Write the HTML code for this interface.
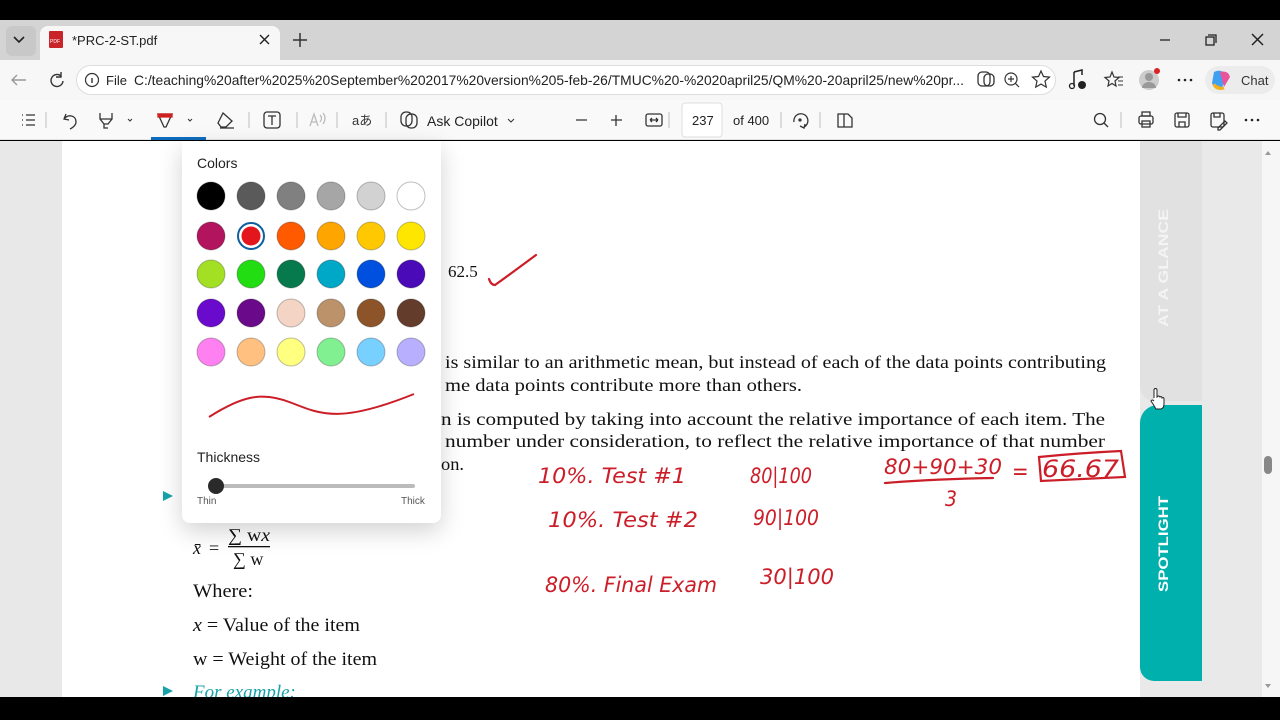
<!DOCTYPE html>
<html><head><meta charset="utf-8"><style>
*{margin:0;padding:0;box-sizing:border-box}
body{width:1280px;height:720px;overflow:hidden;background:#000;font-family:"Liberation Sans",sans-serif;position:relative}
.a{position:absolute}
</style></head><body>
<div class="a" style="left:0;top:20px;width:1280px;height:40px;background:#d4d4d4"></div>
<div class="a" style="left:6px;top:26px;width:30px;height:30px;background:#c8c8c8;border-radius:6px"></div>
<div class="a" style="left:40px;top:26px;width:240px;height:36px;background:#f7f7f7;border-radius:8px 8px 0 0"></div>
<svg class="a" style="left:0;top:20px" width="1280" height="40">
<path d="M14 17l5 5 5-5" stroke="#222" stroke-width="1.6" fill="none"/>
<rect x="49" y="11" width="14" height="17" rx="1" fill="#c8242a"/><text x="50" y="23" font-size="5" fill="#fff" font-family="Liberation Sans">PDF</text>
<text x="72" y="25" font-size="13" fill="#222" font-family="Liberation Sans">*PRC-2-ST.pdf</text>
<path d="M260 15l9 9M269 15l-9 9" stroke="#222" stroke-width="1.4"/>
<path d="M300 13v14M293 20h14" stroke="#333" stroke-width="1.5"/>
<path d="M1160 20h10" stroke="#222" stroke-width="1.3"/>
<rect x="1206" y="17" width="8" height="8" fill="none" stroke="#222" stroke-width="1.3"/><path d="M1208 15h8v8" stroke="#222" fill="none" stroke-width="1.3"/>
<path d="M1252 14l11 11M1263 14l-11 11" stroke="#222" stroke-width="1.5"/>
</svg>
<div class="a" style="left:0;top:60px;width:1280px;height:40px;background:#f7f7f7"></div>
<div class="a" style="left:76px;top:65px;width:980px;height:30px;background:#fff;border:1px solid #ddd;border-radius:16px"></div>
<svg class="a" style="left:0;top:60px" width="1280" height="40">
<path d="M26 20h-14M17 15l-5 5 5 5" stroke="#999" stroke-width="1.4" fill="none"/>
<path d="M61 16a6 6 0 1 0 2 5M61 12v5h-5" stroke="#333" stroke-width="1.4" fill="none"/>
<circle cx="92" cy="20" r="6.5" fill="none" stroke="#333" stroke-width="1.2"/><path d="M92 18v5" stroke="#333" stroke-width="1.4"/>
<text x="106" y="25" font-size="13" fill="#222">File</text>
<text x="134" y="25" font-size="14" fill="#222" textLength="830" lengthAdjust="spacingAndGlyphs">C:/teaching%20after%2025%20September%202017%20version%205-feb-26/TMUC%20-%2020april25/QM%20-20april25/new%20pr...</text>
<rect x="978" y="12" width="12" height="14" rx="4" fill="none" stroke="#333" stroke-width="1.3"/><rect x="984" y="14" width="10" height="12" rx="4" fill="none" stroke="#333" stroke-width="1.3"/>
<circle cx="1011" cy="19" r="6" fill="none" stroke="#333" stroke-width="1.2"/><path d="M1015 23l4 4M1008 19h6M1011 16v6" stroke="#333" stroke-width="1.2"/>
<path d="M1041 11l2.5 5.5 6 .6-4.5 4 1.3 6-5.3-3-5.3 3 1.3-6-4.5-4 6-.6z" fill="none" stroke="#333" stroke-width="1.2"/>
<path d="M1074 12v14M1074 12l8-2v5" stroke="#222" stroke-width="1.5" fill="none"/><circle cx="1072" cy="26" r="2.5" fill="none" stroke="#222" stroke-width="1.3"/><circle cx="1082" cy="25" r="4" fill="#222"/>
<path d="M1112 12l2 5 5 .5-4 3.5 1 5-4-2.5-4 2.5 1-5-4-3.5 5-.5z" fill="none" stroke="#333" stroke-width="1.2"/><path d="M1118 17h5M1118 21h5M1118 25h5" stroke="#333"/>
<circle cx="1149" cy="20" r="10" fill="#ccc"/><circle cx="1149" cy="17" r="4" fill="#999"/><path d="M1142 28a7 6 0 0 1 14 0z" fill="#999"/><circle cx="1157" cy="11" r="3" fill="#d22"/>
<circle cx="1179" cy="20" r="1.3" fill="#222"/><circle cx="1185" cy="20" r="1.3" fill="#222"/><circle cx="1191" cy="20" r="1.3" fill="#222"/>
<rect x="1205" y="6" width="70" height="28" rx="14" fill="#ececec"/>
<path d="M1214 12q8-4 12 4l-4 12q-8 3-10-5z" fill="#3fa0f0"/><path d="M1220 12q8-2 10 5l-6 10" fill="#e8539c"/><path d="M1214 24q2 6 10 4" fill="#f0b020" stroke="#f0b020" stroke-width="3"/>
<text x="1241" y="25" font-size="13" fill="#333">Chat</text>
</svg>
<div class="a" style="left:0;top:100px;width:1280px;height:40px;background:#f9f9f9;border-bottom:1px solid #e2e2e2"></div>
<svg class="a" style="left:0;top:100px" width="1280" height="40">
<g stroke="#333" stroke-width="1.3" fill="none">
<path d="M22 15h1M22 20h1M22 25h1M26 15h9M26 20h9M26 25h9"/>
<path d="M46 12v16" stroke="#ccc"/>
<path d="M66 14l-2 5 5 1M64 19c4-5 12-4 12 3 0 4-4 6-6 7"/>
<path d="M100 13v6l4 5h4l4-5v-6M100 19h12M104 24v4h4"/>
<path d="M128 19l2 2 2-2" stroke-width="1"/>
<path d="M158 14h14l-6 13h-2z" stroke="#333"/><path d="M158 14h14v3h-14z" fill="#d02020" stroke="#d02020"/>
<path d="M188 19l2 2 2-2" stroke-width="1"/>
<path d="M223 13l9 8-6 6h-5l-3-4z"/><path d="M220 28h14"/>
<path d="M249 12v16" stroke="#ccc"/>
<rect x="264" y="12" width="16" height="16" rx="3"/><path d="M268 16h8M272 16v9"/>
<path d="M297 12v16" stroke="#ccc"/>
<path d="M310 26l4-12 4 12M311 22h6M320 15q3 3 0 7M323 13q4 5 0 11" stroke="#bbb"/>
<path d="M337 12v16" stroke="#ccc"/>
<path d="M386 12v16" stroke="#ccc"/>
<rect x="401" y="12" width="11" height="14" rx="5"/><rect x="406" y="14" width="11" height="14" rx="5"/>
<path d="M508 19l3 3 3-3" stroke-width="1"/>
<path d="M576 20h11M611 20h11M616 15v11"/>
<rect x="646" y="14" width="16" height="12" rx="2"/><path d="M650 20h8M650 20l2-2M650 20l2 2M658 20l-2-2M658 20l-2 2"/>
<path d="M669 12v16" stroke="#ccc"/>
<path d="M781 12v16" stroke="#ccc"/>
<path d="M794 22a7 7 0 1 1 10 5M800 26l4 2 1-4"/><circle cx="800" cy="20" r="1" fill="#333"/>
<path d="M820 12v16" stroke="#ccc"/>
<path d="M838 14h6v13h-6zM844 14h4l4 4v9h-8"/>
<circle cx="1100" cy="19" r="5.5"/><path d="M1104 23l4 4"/>
<path d="M1121 12v16" stroke="#ccc"/>
<rect x="1139" y="16" width="14" height="8" rx="2"/><rect x="1142" y="12" width="8" height="4"/><rect x="1142" y="21" width="8" height="6"/>
<rect x="1175" y="13" width="14" height="14" rx="2"/><path d="M1178 13v4h8v-4M1179 27v-5h6v5"/>
<rect x="1211" y="13" width="13" height="14" rx="2"/><path d="M1214 13v4h6v-4M1218 28l7-7 2 2-7 7h-2z"/>
</g>
<rect x="151" y="37" width="55" height="3" fill="#0f6cbd"/>
<text x="352" y="25" font-size="13" fill="#333">aあ</text>
<text x="427" y="26" font-size="14" fill="#222">Ask Copilot</text>
<rect x="682" y="3" width="40" height="34" rx="3" fill="#fff" stroke="#ddd"/>
<text x="692" y="25" font-size="13" fill="#222">237</text>
<text x="733" y="25" font-size="13" fill="#222">of 400</text>
<circle cx="1246" cy="20" r="1.3" fill="#222"/><circle cx="1252" cy="20" r="1.3" fill="#222"/><circle cx="1258" cy="20" r="1.3" fill="#222"/>
</svg>
<div class="a" style="left:0;top:141px;width:1280px;height:556px;background:#e8e8e8"></div>
<div class="a" style="left:62px;top:141px;width:1078px;height:556px;background:#fff"></div>
<div class="a" style="left:1140px;top:141px;width:122px;height:556px;background:#e9e9e9"></div>
<div class="a" style="left:1140px;top:141px;width:62px;height:260px;background:#e1e1e1;border-radius:0 0 0 14px"></div>
<div class="a" style="left:1140px;top:405px;width:62px;height:276px;background:#00b0ad;border-radius:18px 0 0 14px"></div>
<div class="a" style="left:1262px;top:141px;width:18px;height:556px;background:#f6f6f6"></div>
<div class="a" style="left:1264px;top:456px;width:8px;height:18px;background:#888;border-radius:4px"></div>
<svg class="a" style="left:0;top:141px" width="1280" height="556">
<path d="M1265 14l3-4 3 4z" fill="#999"/><path d="M1265 543l3 4 3-4z" fill="#999"/>
<text transform="translate(1168 186) rotate(-90)" font-size="14" font-weight="bold" fill="#f4f4f4" textLength="118" lengthAdjust="spacingAndGlyphs">AT A GLANCE</text>
<text transform="translate(1168 451) rotate(-90)" font-size="14" font-weight="bold" fill="#fff" textLength="96" lengthAdjust="spacingAndGlyphs">SPOTLIGHT</text>
<path d="M1154 257v-8a1.5 1.5 0 0 1 3 0v7l1-1q2 0 2 1q2-1 2 1q2-1 2 1v5q0 4-3 5h-5l-3-5-2-3q1-2 3 0" fill="#fff" stroke="#222" stroke-width="1"/>
<g font-family="Liberation Serif" font-size="18" fill="#111">
<text x="448" y="136" font-size="17">62.5</text>
<text x="445" y="227" textLength="661" lengthAdjust="spacingAndGlyphs">is similar to an arithmetic mean, but instead of each of the data points contributing</text>
<text x="445" y="250" textLength="357" lengthAdjust="spacingAndGlyphs">me data points contribute more than others.</text>
<text x="441" y="284" textLength="664" lengthAdjust="spacingAndGlyphs">n is computed by taking into account the relative importance of each item. The</text>
<text x="445" y="306" textLength="660" lengthAdjust="spacingAndGlyphs">number under consideration, to reflect the relative importance of that number</text>
<text x="441" y="329" textLength="23" lengthAdjust="spacingAndGlyphs">on.</text>
<text x="193" y="413" font-style="italic">x̄</text><text x="209" y="413">=</text>
<text x="228" y="400" textLength="42" lengthAdjust="spacingAndGlyphs">∑ w<tspan font-style="italic">x</tspan></text>
<rect x="228" y="405" width="42" height="1.3" fill="#111"/>
<text x="233" y="424">∑ w</text>
<text x="193" y="456" font-size="19" textLength="60" lengthAdjust="spacingAndGlyphs">Where:</text>
<text x="193" y="490" font-size="19" textLength="167" lengthAdjust="spacingAndGlyphs"><tspan font-style="italic">x</tspan> = Value of the item</text>
<text x="193" y="524" font-size="19" textLength="184" lengthAdjust="spacingAndGlyphs">w = Weight of the item</text>
<text x="193" y="557" font-size="19" fill="#16a3a8" font-style="italic">For example:</text>
</g>
<path d="M163 350l10 5-10 5z" fill="#16a3a8"/><path d="M163 545l10 5-10 5z" fill="#16a3a8"/>
<path d="M440 0v12" stroke="#111" stroke-width="2"/>
<g stroke="#cc1e28" stroke-width="2.2" fill="none" stroke-linecap="round">
<path d="M489 138q2 6 6 6q14-10 41-30"/>
<path d="M885 342q50-4 108-5"/>
<path d="M1039 316q40-4 82-6l4 26q-40 2-84 4z"/>
</g>
<g font-family="DejaVu Sans Condensed,DejaVu Sans,sans-serif" fill="#cc1e28" font-style="italic">
<text x="538" y="342" font-size="21" textLength="148" lengthAdjust="spacingAndGlyphs">10%. Test #1</text>
<text x="750" y="342" font-size="21" textLength="62" lengthAdjust="spacingAndGlyphs">80|100</text>
<text x="548" y="386" font-size="21" textLength="150" lengthAdjust="spacingAndGlyphs">10%. Test #2</text>
<text x="753" y="384" font-size="21" textLength="66" lengthAdjust="spacingAndGlyphs">90|100</text>
<text x="545" y="451" font-size="21" textLength="172" lengthAdjust="spacingAndGlyphs">80%. Final Exam</text>
<text x="760" y="443" font-size="21" textLength="74" lengthAdjust="spacingAndGlyphs">30|100</text>
<text x="884" y="333" font-size="21" textLength="118" lengthAdjust="spacingAndGlyphs">80+90+30</text>
<text x="945" y="365" font-size="21">3</text>
<text x="1012" y="338" font-size="22">=</text>
<text x="1042" y="336" font-size="24" textLength="77" lengthAdjust="spacingAndGlyphs">66.67</text>
</g>
</svg>
<div class="a" style="left:182px;top:141px;width:259px;height:382px;background:#fff;border-radius:0 0 8px 8px;box-shadow:0 8px 24px rgba(0,0,0,.18)"></div>
<svg class="a" style="left:182px;top:141px" width="259" height="382">
<text x="15" y="27" font-size="14" fill="#222">Colors</text>
<g stroke="rgba(0,0,0,.25)" stroke-width="1">
<circle cx="29" cy="55" r="14" fill="#000"/><circle cx="69" cy="55" r="14" fill="#5a5a5a"/><circle cx="109" cy="55" r="14" fill="#808080"/><circle cx="149" cy="55" r="14" fill="#a6a6a6"/><circle cx="189" cy="55" r="14" fill="#d2d2d2"/><circle cx="229" cy="55" r="14" fill="#fff"/>
<circle cx="29" cy="95" r="14" fill="#b3145e"/><circle cx="109" cy="95" r="14" fill="#ff5a00"/><circle cx="149" cy="95" r="14" fill="#ffa500"/><circle cx="189" cy="95" r="14" fill="#ffc800"/><circle cx="229" cy="95" r="14" fill="#ffe600"/>
<circle cx="29" cy="133" r="14" fill="#a3e024"/><circle cx="69" cy="133" r="14" fill="#22dd11"/><circle cx="109" cy="133" r="14" fill="#077a4d"/><circle cx="149" cy="133" r="14" fill="#00a8c8"/><circle cx="189" cy="133" r="14" fill="#0050e0"/><circle cx="229" cy="133" r="14" fill="#4a0ab8"/>
<circle cx="29" cy="172" r="14" fill="#6a0acc"/><circle cx="69" cy="172" r="14" fill="#6a0a8a"/><circle cx="109" cy="172" r="14" fill="#f4d4c4"/><circle cx="149" cy="172" r="14" fill="#bc926a"/><circle cx="189" cy="172" r="14" fill="#8c5428"/><circle cx="229" cy="172" r="14" fill="#643c2c"/>
<circle cx="29" cy="211" r="14" fill="#ff80f0"/><circle cx="69" cy="211" r="14" fill="#ffc080"/><circle cx="109" cy="211" r="14" fill="#ffff80"/><circle cx="149" cy="211" r="14" fill="#80f090"/><circle cx="189" cy="211" r="14" fill="#78d0ff"/><circle cx="229" cy="211" r="14" fill="#b8b0ff"/>
</g>
<circle cx="69" cy="95" r="13" fill="#fff" stroke="#0f5fa0" stroke-width="2"/><circle cx="69" cy="95" r="9.5" fill="#e3161d"/>
<path d="M27 276C60 255 80 250 110 262S160 282 232 253" stroke="#cc1e28" stroke-width="2" fill="none"/>
<text x="15" y="321" font-size="14" fill="#222">Thickness</text>
<rect x="28" y="343" width="205" height="4" rx="2" fill="#bbb"/>
<circle cx="34" cy="345" r="8" fill="#2a2a2a"/>
<text x="15" y="363" font-size="10" fill="#555">Thin</text>
<text x="219" y="363" font-size="10" fill="#555">Thick</text>
</svg>
</body></html>
